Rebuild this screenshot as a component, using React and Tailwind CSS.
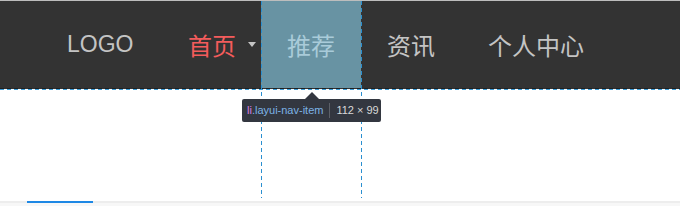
import React from "react";

export default function App() {
  return (
    <div className="relative w-[680px] h-[206px] overflow-hidden bg-white flex flex-col">
      <div className="h-px bg-[#bdbdbd]" />
      <nav className="h-[87px] bg-[#333333] flex items-stretch text-[#c4c4c4]">
        <div className="ml-[67px] w-[94px] flex items-center text-[23px] font-['Liberation_Sans',sans-serif]">
          LOGO
        </div>
        <div className="w-[100px] flex items-center pl-[27px] text-[24px] text-[#f45c5c] font-['Noto_Sans_CJK_SC',sans-serif]">
          <span>首页</span>
          <span className="ml-[12px] w-0 h-0 border-l-[4.5px] border-r-[4.5px] border-t-[5px] border-l-transparent border-r-transparent border-t-[#c4c4c4]" />
        </div>
        <div className="w-[100px] flex items-center justify-center bg-[#6893a3] text-[24px] text-[#a9cbd9] font-['Noto_Sans_CJK_SC',sans-serif]">
          推荐
        </div>
        <div className="w-[100px] flex items-center justify-center text-[24px] font-['Noto_Sans_CJK_SC',sans-serif]">
          资讯
        </div>
        <div className="flex items-center pl-[27px] text-[24px] font-['Noto_Sans_CJK_SC',sans-serif]">
          个人中心
        </div>
      </nav>
      <div className="h-px bg-[repeating-linear-gradient(to_right,#1f1f1f_0_4px,#333333_4px_7px)]" />
      <div className="h-px bg-[repeating-linear-gradient(to_right,#3a9bd5_0_4px,#ffffff_4px_7px)]" />
      <div className="flex-1" />
      <div className="h-[5px] bg-[#f7f7f7] flex flex-col">
        <div className="h-[2px] bg-[#ededed]">
          <div className="ml-[27px] w-[66px] h-[2px] bg-[#1e88e5]" />
        </div>
      </div>

      {/* devtools guide lines */}
      <div className="absolute left-[261px] top-[1px] w-px h-[197px] bg-[repeating-linear-gradient(to_bottom,#2a8fd0_0_4px,transparent_4px_7px)]" />
      <div className="absolute left-[361px] top-[1px] w-px h-[197px] bg-[repeating-linear-gradient(to_bottom,#2a8fd0_0_4px,transparent_4px_7px)]" />

      {/* tooltip */}
      <div className="absolute left-[242px] top-[92px] flex flex-col items-start">
        <div className="ml-[63px] w-0 h-0 border-l-[7px] border-r-[7px] border-b-[7px] border-l-transparent border-r-transparent border-b-[#333740]" />
        <div className="h-[23px] w-[139px] bg-[#333740] rounded-[2px] flex items-center pl-[5px] text-[11px] font-['Liberation_Sans',sans-serif] whitespace-nowrap">
          <span className="text-[#d97ee8]">li</span>
          <span className="text-[#7cb3e6]">.layui-nav-item</span>
          <span className="mx-[6px] w-px h-[15px] bg-[#5c6068]" />
          <span className="text-[#d9d9d9]">112 × 99</span>
        </div>
      </div>
    </div>
  );
}
